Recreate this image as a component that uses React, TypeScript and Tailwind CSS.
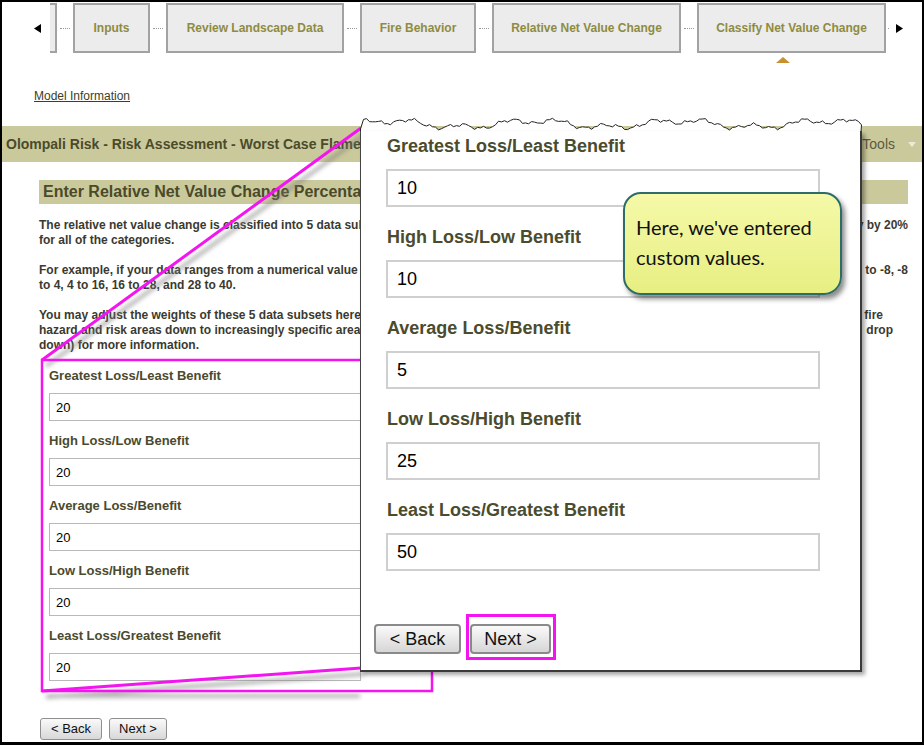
import React from "react"

const tabs = [
  { label: "Inputs", w: "w-[77px]" },
  { label: "Review Landscape Data", w: "w-[178px]" },
  { label: "Fire Behavior", w: "w-[116px]" },
  { label: "Relative Net Value Change", w: "w-[189px]" },
]

const leftFields = [
  "Greatest Loss/Least Benefit",
  "High Loss/Low Benefit",
  "Average Loss/Benefit",
  "Low Loss/High Benefit",
  "Least Loss/Greatest Benefit",
]

const zoomFields = [
  { label: "Greatest Loss/Least Benefit", value: "10" },
  { label: "High Loss/Low Benefit", value: "10" },
  { label: "Average Loss/Benefit", value: "5" },
  { label: "Low Loss/High Benefit", value: "25" },
  { label: "Least Loss/Greatest Benefit", value: "50" },
]

// torn paper edge along the top of the zoomed panel
const TW = 502
function tornEdge() {
  const pts: string[] = []
  for (let x = 0; x <= TW; x += 3) {
    let y =
      9 -
      3.2 * Math.sin(x * 0.043 + 0.4) -
      2.4 * Math.sin(x * 0.129 + 1.3) -
      1.4 * Math.sin(x * 0.37 + 0.5) -
      0.8 * Math.sin(x * 0.91 + 2.1)
    if (x === 0) y = 14
    y = Math.max(1, Math.min(15, y))
    pts.push(`${x + 0.5},${y.toFixed(1)}`)
  }
  const line = "M0.5,17 L" + pts.join(" L") + ` L${TW - 1},17`
  const fill = "M0.5,17 L" + pts.join(" L") + ` L${TW - 1},17 Z`
  return { line, fill }
}

function Arrow({ dir }: { dir: "left" | "right" }) {
  return (
    <svg width="7" height="9" viewBox="0 0 7 9" className="block shrink-0">
      {dir === "left" ? <path d="M7 0 L0 4.5 L7 9 Z" fill="#000" /> : <path d="M0 0 L7 4.5 L0 9 Z" fill="#000" />}
    </svg>
  )
}

function Dots() {
  return (
    <div className="flex w-[16px] shrink-0 items-center">
      <div className="ml-[3px] w-[10px] border-t border-dotted border-[#9a9a9a]" />
    </div>
  )
}

export default function App() {
  const edge = tornEdge()
  return (
    <div className="relative h-[745px] w-[924px] overflow-hidden border-b-[3px] border-l-2 border-r-2 border-t-2 border-black bg-white font-['Liberation_Sans',Arial,sans-serif]">
      {/* step tabs */}
      <div className="mt-px flex h-[50px] items-stretch pl-[32px]">
        <div className="flex items-center">
          <Arrow dir="left" />
        </div>
        <div className="ml-[9px] w-[7px] border-y-2 border-r-2 border-[#a2a2a2] bg-[#ececec]" />
        <Dots />
        {tabs.map((t) => (
          <React.Fragment key={t.label}>
            <div className={`${t.w} flex shrink-0 items-center justify-center border-2 border-[#a2a2a2] bg-[#ececec] text-[12px] font-bold text-[#8e8b42]`}>
              {t.label}
            </div>
            <Dots />
          </React.Fragment>
        ))}
        <div className="relative flex w-[189px] shrink-0 items-center justify-center border-2 border-[#a2a2a2] bg-[#ececec] text-[12px] font-bold text-[#8e8b42]">
          Classify Net Value Change
          <div className="absolute left-[77px] top-[52px] h-0 w-0 border-b-[6px] border-l-[7px] border-r-[7px] border-b-[#c8912e] border-l-transparent border-r-transparent" />
        </div>
        <div className="flex items-center">
          <div className="ml-[2px] h-px w-px bg-[#9a9a9a]" />
          <div className="ml-[7px]">
            <Arrow dir="right" />
          </div>
        </div>
      </div>

      <div className="ml-[32px] mt-[36px] text-[12px] leading-[15px] text-[#3e3e22] underline">Model Information</div>

      {/* project band */}
      <div className="mt-[22px] flex h-[36px] items-center justify-between bg-[#cac99b] pl-[4px] pr-[6px]">
        <div className="text-[14px] font-bold text-[#4b4b2b]">Olompali Risk - Risk Assessment - Worst Case Flame Length</div>
        <div className="flex items-center gap-[13px] text-[14px] text-[#5a5a3e]">
          Tools
          <div className="h-0 w-0 border-l-[4px] border-r-[4px] border-t-[5px] border-l-transparent border-r-transparent border-t-[#ecebd6]" />
        </div>
      </div>

      <div className="ml-[37px] mt-[18px] flex h-[24px] w-[869px] items-center bg-[#cac99b] pl-[4px] text-[16px] font-bold text-[#4a4a2a]">
        Enter Relative Net Value Change Percentages
      </div>

      <div className="ml-[37px] mt-[14px] w-[869px] text-[12px] font-bold leading-[15px] text-[#3a3a30]">
        <div className="flex justify-between whitespace-nowrap">
          <span>The relative net value change is classified into 5 data subsets. By default, these subsets are</span>
          <span>weighted equally by 20%</span>
        </div>
        <div>for all of the categories.</div>
        <div className="mt-[15px] flex justify-between whitespace-nowrap">
          <span>For example, if your data ranges from a numerical value of -40 to 40, the subsets would be -40</span>
          <span>to -8, -8</span>
        </div>
        <div>to 4, 4 to 16, 16 to 28, and 28 to 40.</div>
        <div className="mt-[15px] flex justify-between whitespace-nowrap">
          <span>You may adjust the weights of these 5 data subsets here. The classification narrows the</span>
          <span className="mr-[25px]">fire</span>
        </div>
        <div className="flex justify-between whitespace-nowrap">
          <span>hazard and risk areas down to increasingly specific areas. See the Help topic (in the Help</span>
          <span className="mr-[15px]">drop</span>
        </div>
        <div>down) for more information.</div>
      </div>

      {/* base form */}
      <div className="ml-[47px] mt-[15px] flex flex-col">
        {leftFields.map((f) => (
          <div key={f} className="mb-[12px]">
            <div className="text-[13px] font-bold leading-[16px] text-[#4a4a2e]">{f}</div>
            <input
              readOnly
              value="20"
              className="mt-[9px] block h-[28px] w-[312px] border border-[#b9b9b9] bg-white pl-[6px] text-[13px] text-black outline-none"
            />
          </div>
        ))}
      </div>
      <div className="ml-[38px] mt-[25px] flex gap-[7px]">
        <button className="h-[22px] w-[62px] rounded-[3px] border border-[#8f8f8f] bg-gradient-to-b from-[#fafafa] to-[#d8d8d8] text-[13px] text-[#111]">&lt; Back</button>
        <button className="h-[22px] w-[58px] rounded-[3px] border border-[#8f8f8f] bg-gradient-to-b from-[#fafafa] to-[#d8d8d8] text-[13px] text-[#111]">Next &gt;</button>
      </div>

      {/* magenta annotation */}
      <svg width="924" height="745" className="pointer-events-none absolute -left-[2px] -top-[2px]">
        <defs>
          <filter id="blur" x="-20%" y="-20%" width="140%" height="140%">
            <feGaussianBlur stdDeviation="2" />
          </filter>
        </defs>
        <g stroke="#7a7a7a" strokeWidth="4" opacity="0.55" filter="url(#blur)" fill="none">
          <line x1="46" y1="366" x2="364" y2="135" />
          <line x1="46" y1="697" x2="364" y2="674" />
          <line x1="48" y1="696" x2="360" y2="696" />
        </g>
        <rect x="42" y="360" width="390" height="331" fill="none" stroke="#f414ef" strokeWidth="2.5" />
        <line x1="42" y1="360" x2="361" y2="128" stroke="#f414ef" strokeWidth="3" />
        <line x1="42" y1="691" x2="361" y2="668" stroke="#f414ef" strokeWidth="3" />
      </svg>

      {/* zoomed panel */}
      <div className="absolute left-[358px] top-[113px] flex h-[557px] w-[502px] flex-col">
        <svg width={TW} height="17" className="block shrink-0">
          <path d={edge.fill} fill="#fff" />
          <path d={edge.line} fill="none" stroke="#222" strokeWidth="1" />
        </svg>
        <div className="-mt-px flex flex-1 flex-col border-b-2 border-l border-r-2 border-b-[#3a3a3a] border-l-[#444] border-r-[#3a3a3a] bg-white shadow-[3px_3px_4px_rgba(0,0,0,0.35)]">
          <div className="flex flex-col pl-[25px] pt-[4px]">
            {zoomFields.map((f) => (
              <div key={f.label} className="mb-[19px]">
                <div className="pl-px text-[18px] font-bold leading-[22px] text-[#4b4b2d]">{f.label}</div>
                <input
                  readOnly
                  value={f.value}
                  className="mt-[12px] block h-[38px] w-[434px] border-2 border-[#cfcfcf] bg-white pl-[9px] text-[18px] text-black outline-none"
                />
              </div>
            ))}
          </div>
          <div className="mt-[34px] flex gap-[9px] pl-[13px]">
            <button className="h-[30px] w-[87px] rounded-[4px] border-2 border-[#8a8a8a] bg-gradient-to-b from-[#fafafa] to-[#d6d6d6] text-[18px] text-[#111]">&lt; Back</button>
            <div className="relative">
              <button className="h-[30px] w-[81px] rounded-[4px] border-2 border-[#8a8a8a] bg-gradient-to-b from-[#fafafa] to-[#d6d6d6] text-[18px] text-[#111]">Next &gt;</button>
              <div className="absolute -bottom-[6px] -left-[4px] -right-[5px] -top-[10px] border-[3px] border-[#f414ef]" />
            </div>
          </div>
        </div>
      </div>

      {/* callout */}
      <div className="absolute left-[621px] top-[190px] h-[103px] w-[219px] rounded-[18px] border-2 border-[#2e6c6a] bg-gradient-to-b from-[#f5f9a8] to-[#e7ef82] pl-[11px] pt-[18px] font-['Lato',sans-serif] text-[20px] leading-[30px] text-[#111] shadow-[3px_4px_5px_rgba(0,0,0,0.45)]">
        <div>Here, we've entered</div>
        <div>custom values.</div>
      </div>
    </div>
  )
}
